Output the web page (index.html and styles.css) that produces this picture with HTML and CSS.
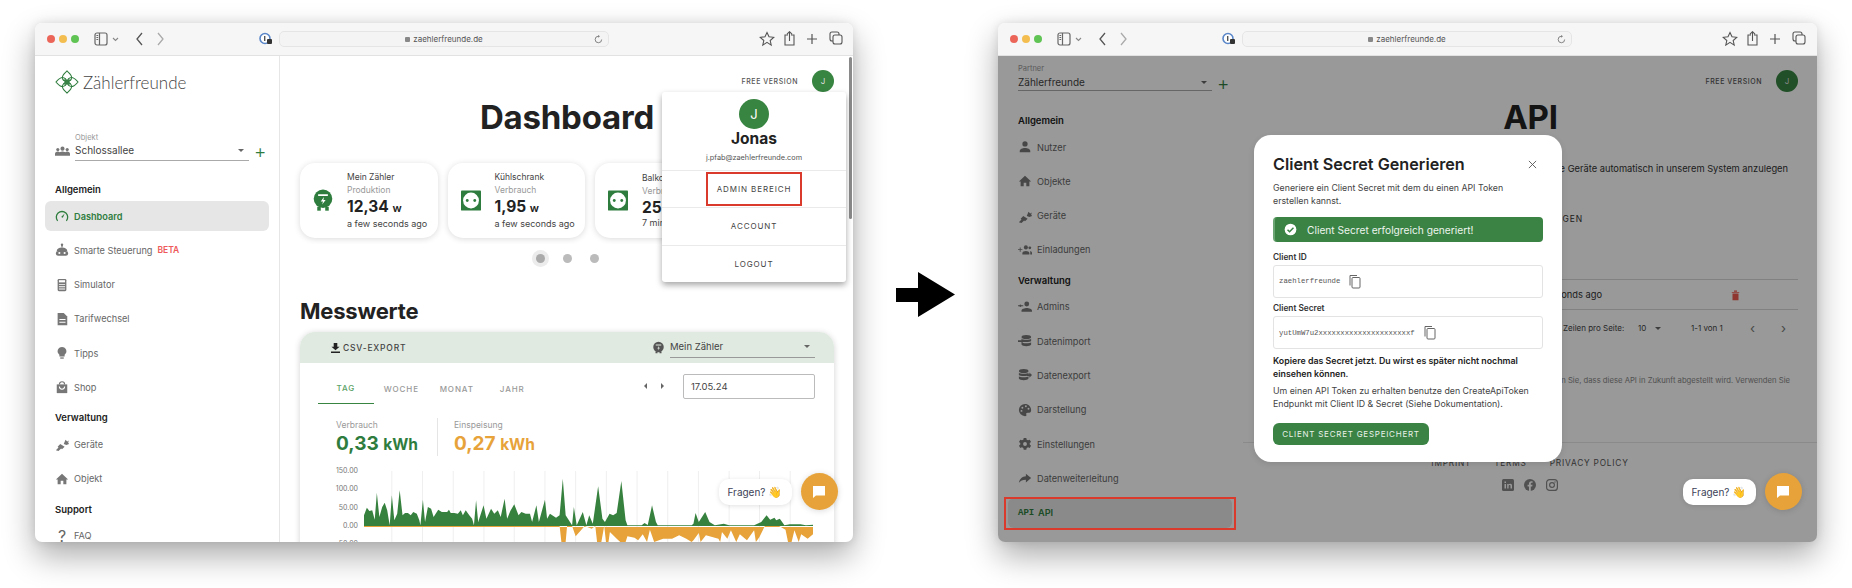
FILE: index.html
```html
<!DOCTYPE html>
<html lang="de">
<head>
<meta charset="utf-8">
<title>Zählerfreunde</title>
<link rel="stylesheet" href="styles.css">
</head>
<body>
<div class="stage">

<section class="window narrow">
  <header class="toolbar">
    <div class="lights"><i class="red"></i><i class="yellow"></i><i class="green"></i></div>
    <svg class="tb-side" viewBox="0 0 26 18"><rect x="1" y="1" width="12" height="12" rx="2" fill="none" stroke="#666" stroke-width="1.2"/><path d="M5.5 1v12" stroke="#666" stroke-width="1.2"/><path d="M2.4 3.5h1.8M2.4 5.5h1.8M2.4 7.5h1.8" stroke="#666"/><path d="M19 6l2.5 2.5L24 6" fill="none" stroke="#888" stroke-width="1.1"/></svg>
    <svg class="tb-nav" viewBox="0 0 28 14"><path d="M6 1L1 7l5 6" fill="none" stroke="#555" stroke-width="1.3"/><path d="M22 1l5 6-5 6" fill="none" stroke="#aaa" stroke-width="1.3"/></svg>
    <span class="shield"><svg viewBox="0 0 14 14"><circle cx="6" cy="6.5" r="5" fill="#fff" stroke="#5b87c9" stroke-width="1.6"/><rect x="5" y="4" width="1.4" height="5" fill="#555"/><rect x="8" y="7" width="5" height="5" rx="1" fill="#333"/></svg></span>
    <div class="urlbar"><span class="lock"></span>zaehlerfreunde.de<svg class="reload" viewBox="0 0 10 10"><path d="M8.5 5a3.6 3.6 0 1 1-3.6-3.6" fill="none" stroke="#777"/><path d="M4.6 0v3l2-1.5z" fill="#777"/></svg></div>
    <svg class="tb-actions" viewBox="0 0 84 16"><path d="M8 1.5l2 4.300 4.700.5-3.500 3.200 1 4.600L8 11.300l-4.200 2.800 1-4.600L1.300 6.300 6 5.800z" fill="none" stroke="#555" stroke-width="1.1"/><path d="M29 4h-3v10h9V4h-3M30.500 10V1M28 3.200l2.500-2.500L33 3.200" fill="none" stroke="#555" stroke-width="1.1"/><path d="M53 3v10M48 8h10" stroke="#555" stroke-width="1.2"/><rect x="71" y="1" width="9" height="9" rx="2" fill="none" stroke="#555" stroke-width="1.1"/><rect x="74" y="4" width="9" height="9" rx="2" fill="#f6f6f6" stroke="#555" stroke-width="1.1"/></svg>
  </header>
  <div class="app">
    <aside class="sidebar">
      <div class="logo">
        <svg class="logo-mark" viewBox="0 0 26 26"><g fill="none" stroke="#2f7d3e" stroke-width="1.1"><path d="M13 1C15 3 18 5 18 8C18 11 15 13 13 13C11 13 8 11 8 8C8 5 11 3 13 1z"/><path d="M13 1C15 3 18 5 18 8C18 11 15 13 13 13C11 13 8 11 8 8C8 5 11 3 13 1z" transform="rotate(90 13 13)"/><path d="M13 1C15 3 18 5 18 8C18 11 15 13 13 13C11 13 8 11 8 8C8 5 11 3 13 1z" transform="rotate(180 13 13)"/><path d="M13 1C15 3 18 5 18 8C18 11 15 13 13 13C11 13 8 11 8 8C8 5 11 3 13 1z" transform="rotate(270 13 13)"/><path d="M11 9v8M15 9v8M9 11h8M9 15h8"/></g></svg>
        <span class="logo-text">Zählerfreunde</span>
      </div>
      <div class="picker">
        <svg class="picker-icon" viewBox="0 0 16 10"><circle cx="8" cy="2.5" r="2.2"/><circle cx="3" cy="3.500" r="1.700"/><circle cx="13" cy="3.500" r="1.700"/><path d="M0 10V8c0-1.500 2-2.400 3-2.400s1.500.3 2 .6c1-.6 2-.8 3-.8s2 .2 3 .8c.5-.3 1-.6 2-.6s3 .9 3 2.400v2z"/></svg>
        <div class="picker-field">
          <label class="picker-label">Objekt</label>
          <div class="picker-value">Schlossallee<span class="caret"></span></div>
        </div>
        <span class="plus">+</span>
      </div>
      <h4 class="nav-head first">Allgemein</h4>
      <a class="nav-item active"><svg class="ni" viewBox="0 0 16 16"><path d="M3 13.500A6.500 6.500 0 1 1 13 13.500" fill="none" stroke="#2f7d3e" stroke-width="1.500"/><path d="M11 5L9 10 7 9z" fill="#2f7d3e"/></svg>Dashboard</a>
      <a class="nav-item"><svg class="ni" viewBox="0 0 16 16"><circle cx="8" cy="2" r="1.400"/><rect x="7.300" y="2" width="1.400" height="3"/><path d="M2 9c0-2.500 2.500-4 6-4s6 1.500 6 4z"/><rect x="1" y="9" width="14" height="5.500" rx="2.500"/><circle cx="5" cy="11.500" r="1.200" fill="#fff"/><circle cx="11" cy="11.500" r="1.200" fill="#fff"/></svg>Smarte Steuerung<span class="beta">BETA</span></a>
      <a class="nav-item"><svg class="ni" viewBox="0 0 16 16"><rect x="3" y="1" width="10" height="14" rx="1.500"/><rect x="4.500" y="2.500" width="7" height="2.500" fill="#fff"/><path d="M4.500 7h7v1h-7zM4.500 9.500h7v1h-7zM4.500 12h7v1h-7z" fill="#fff"/></svg>Simulator</a>
      <a class="nav-item"><svg class="ni" viewBox="0 0 16 16"><path d="M3 1h7l4 4v10H3z"/><path d="M5 8h7v1.200H5zM5 11h7v1.200H5z" fill="#fff"/></svg>Tarifwechsel</a>
      <a class="nav-item"><svg class="ni" viewBox="0 0 16 16"><path d="M8 1a5 5 0 0 0-3 9v2h6v-2a5 5 0 0 0-3-9z"/><rect x="6" y="13" width="4" height="1.500"/></svg>Tipps</a>
      <a class="nav-item"><svg class="ni" viewBox="0 0 16 16"><path d="M2 5h12v10H2z"/><path d="M5 5a3 3 0 0 1 6 0" fill="none" stroke="#777" stroke-width="1.300"/><path d="M5 7.500a3 3 0 0 0 6 0" fill="none" stroke="#fff" stroke-width="1.200"/></svg>Shop</a>
      <h4 class="nav-head">Verwaltung</h4>
      <a class="nav-item"><svg class="ni" viewBox="0 0 16 16"><path d="M1 15l3-3-1-1 3-3 5 3-3 3-1-1-3 3zM10 8l2-5 2 2 2-1-1 2 1 2-3 1z"/></svg>Geräte</a>
      <a class="nav-item"><svg class="ni" viewBox="0 0 16 16"><path d="M8 2L1 8.500h2V14h3.500v-4h3v4H13V8.500h2z"/></svg>Objekt</a>
      <h4 class="nav-head">Support</h4>
      <a class="nav-item"><span class="ni-q">?</span>FAQ</a>
    </aside>
    <main class="main">
      <div class="scrollthumb"></div>
      <div class="topbar"><span class="version">FREE VERSION</span><span class="avatar">J</span></div>
      <h1 class="title">Dashboard</h1>
      <div class="cards">
        <article class="card">
          <svg class="device" viewBox="0 0 22 26"><circle cx="11" cy="11" r="10.500" fill="#2f7d3e"/><rect x="4.500" y="20" width="4" height="4.500" fill="#2f7d3e"/><rect x="13.500" y="20" width="4" height="4.500" fill="#2f7d3e"/><path d="M5.500 6h11v1.800h-11zM12 9l-3.500 5h2.500l-1 3.500 4-5h-2.500z" fill="#fff"/></svg>
          <div class="card-body"><div class="c-name">Mein Zähler</div><div class="c-kind">Produktion</div><div class="c-val">12,34 <small>w</small></div><div class="c-time">a few seconds ago</div></div>
        </article>
        <article class="card">
          <svg class="device" viewBox="0 0 24 24"><rect width="24" height="24" rx="1" fill="#2f7d3e"/><circle cx="12" cy="12" r="9.500" fill="#fff"/><circle cx="7.500" cy="12" r="1.700" fill="#2f7d3e"/><circle cx="16.500" cy="12" r="1.700" fill="#2f7d3e"/></svg>
          <div class="card-body"><div class="c-name">Kühlschrank</div><div class="c-kind">Verbrauch</div><div class="c-val">1,95 <small>w</small></div><div class="c-time">a few seconds ago</div></div>
        </article>
        <article class="card">
          <svg class="device" viewBox="0 0 24 24"><rect width="24" height="24" rx="1" fill="#2f7d3e"/><circle cx="12" cy="12" r="9.500" fill="#fff"/><circle cx="7.500" cy="12" r="1.700" fill="#2f7d3e"/><circle cx="16.500" cy="12" r="1.700" fill="#2f7d3e"/></svg>
          <div class="card-body"><div class="c-name">Balkon</div><div class="c-kind">Verbrauch</div><div class="c-val">252</div><div class="c-time">7 min</div></div>
        </article>
      </div>
      <div class="dots"><i class="on"></i><i></i><i></i></div>
      <h2 class="section">Messwerte</h2>
      <div class="panel">
        <div class="panel-head">
          <span class="csv"><svg viewBox="0 0 10 11"><path d="M3 0h4v4h2.500L5 8 .5 4H3zM0 9.500h10V11H0z" fill="#222"/></svg>CSV-EXPORT</span>
          <div class="meter"><svg class="meter-icon" viewBox="0 0 22 24"><circle cx="11" cy="11" r="10.500" fill="#555"/><rect x="5" y="20" width="4" height="3.500" fill="#555"/><rect x="13" y="20" width="4" height="3.500" fill="#555"/><path d="M5.500 6h11v1.800h-11zM12 9l-3.500 5h2.500l-1 3.500 4-5h-2.500z" fill="#dfe9e0"/></svg><div class="meter-sel">Mein Zähler<span class="caret"></span></div></div>
        </div>
        <div class="tabrow">
          <nav class="tabs"><span class="tab on">TAG</span><span class="tab">WOCHE</span><span class="tab">MONAT</span><span class="tab">JAHR</span></nav>
          <div class="datepick"><span class="arrows"><i class="al"></i><i class="ar"></i></span><span class="dateinput">17.05.24</span></div>
        </div>
        <div class="stats">
          <div class="stat"><div class="s-label">Verbrauch</div><div class="s-val grn">0,33 <small>kWh</small></div></div>
          <div class="stat sep"><div class="s-label">Einspeisung</div><div class="s-val org">0,27 <small>kWh</small></div></div>
        </div>
        <div class="chart">
          <div class="axis"><span>150.00</span><span>100.00</span><span>50.00</span><span>0.00</span><span>-50.00</span></div>
          <svg class="plot" viewBox="207 32 1258 213" preserveAspectRatio="none">
            <path class="grid" d="M285 32v213M371 32v213M457 32v213M543 32v213M628 32v213M714 32v213M800 32v213M886 32v213M972 32v213M1058 32v213M1144 32v213M1230 32v213M1315 32v213M1401 32v213"/>
            <polygon fill="#e7a33a" points="207,196 755,196 760,245 772,245 776,197 790,197 800,228 815,210 825,197 845,205 855,197 860,245 872,245 880,197 885,245 892,245 896,215 915,235 925,245 940,245 945,228 965,232 975,240 988,222 1000,245 1008,208 1020,245 1045,235 1070,235 1090,225 1110,235 1125,245 1130,240 1145,218 1150,245 1165,225 1200,235 1205,245 1210,215 1225,235 1235,210 1250,245 1260,222 1280,240 1300,210 1305,245 1315,230 1330,197 1370,197 1388,208 1395,245 1405,245 1413,210 1425,245 1432,222 1450,235 1465,222 1465,196 1465,200 207,200"/>
            <polygon fill="#37813f" points="207,197 207,165 215,142 222,152 230,150 237,178 243,97 250,170 258,140 265,127 272,150 279,195 285,105 292,180 300,160 307,90 315,165 322,158 330,158 338,165 345,155 355,160 362,180 365,195 372,118 378,185 386,140 395,145 402,170 415,148 425,155 440,155 445,148 450,158 460,158 470,160 478,150 484,165 492,150 502,165 510,175 515,195 521,120 527,185 542,135 550,175 563,145 572,160 582,150 590,170 601,115 608,175 618,150 628,132 640,165 648,155 660,160 672,160 678,185 690,135 697,185 714,118 720,175 728,160 745,172 755,165 764,55 772,165 790,195 795,140 803,195 820,155 830,195 838,165 848,190 863,78 875,175 882,185 895,160 905,165 915,158 928,62 940,180 945,195 955,195 985,195 993,188 1002,194 1014,135 1025,185 1030,195 1125,195 1130,190 1136,158 1145,185 1163,155 1175,185 1190,195 1215,190 1230,195 1300,195 1320,185 1335,165 1345,178 1357,172 1362,180 1372,175 1385,195 1400,192 1430,192 1445,195 1465,193 1465,197"/>
          </svg>
        </div>
      </div>
      <div class="chat"><span class="chat-bubble">Fragen? <em>👋</em></span><span class="chat-btn"><svg viewBox="0 0 14 14"><path d="M1 1h12v9.500H4L1 13z" fill="#fff"/></svg></span></div>
      <div class="usermenu">
        <div class="um-head">
          <span class="um-avatar">J</span>
          <div class="um-name">Jonas</div>
          <div class="um-mail">j.pfab@zaehlerfreunde.com</div>
        </div>
        <div class="um-item"><span class="highlight">ADMIN BEREICH</span></div>
        <div class="um-item">ACCOUNT</div>
        <div class="um-item">LOGOUT</div>
      </div>
    </main>
  </div>
</section>

<svg class="bigarrow" viewBox="0 0 59 45"><path d="M0 16h22V0l37 22.500-37 22.500V30H0z" fill="#000"/></svg>

<section class="window">
  <header class="toolbar">
    <div class="lights"><i class="red"></i><i class="yellow"></i><i class="green"></i></div>
    <svg class="tb-side" viewBox="0 0 26 18"><rect x="1" y="1" width="12" height="12" rx="2" fill="none" stroke="#666" stroke-width="1.2"/><path d="M5.500 1v12" stroke="#666" stroke-width="1.2"/><path d="M2.400 3.500h1.800M2.400 5.500h1.800M2.400 7.500h1.800" stroke="#666"/><path d="M19 6l2.500 2.500L24 6" fill="none" stroke="#888" stroke-width="1.1"/></svg>
    <svg class="tb-nav" viewBox="0 0 28 14"><path d="M6 1L1 7l5 6" fill="none" stroke="#555" stroke-width="1.3"/><path d="M22 1l5 6-5 6" fill="none" stroke="#aaa" stroke-width="1.3"/></svg>
    <span class="shield"><svg viewBox="0 0 14 14"><circle cx="6" cy="6.500" r="5" fill="#fff" stroke="#5b87c9" stroke-width="1.6"/><rect x="5" y="4" width="1.400" height="5" fill="#555"/><rect x="8" y="7" width="5" height="5" rx="1" fill="#333"/></svg></span>
    <div class="urlbar"><span class="lock"></span>zaehlerfreunde.de<svg class="reload" viewBox="0 0 10 10"><path d="M8.500 5a3.600 3.600 0 1 1-3.600-3.600" fill="none" stroke="#777"/><path d="M4.600 0v3l2-1.500z" fill="#777"/></svg></div>
    <svg class="tb-actions" viewBox="0 0 84 16"><path d="M8 1.500l2 4.300 4.700.5-3.500 3.200 1 4.600L8 11.300l-4.200 2.800 1-4.600L1.300 6.300 6 5.800z" fill="none" stroke="#555" stroke-width="1.1"/><path d="M29 4h-3v10h9V4h-3M30.500 10V1M28 3.200l2.500-2.500L33 3.200" fill="none" stroke="#555" stroke-width="1.1"/><path d="M53 3v10M48 8h10" stroke="#555" stroke-width="1.2"/><rect x="71" y="1" width="9" height="9" rx="2" fill="none" stroke="#555" stroke-width="1.1"/><rect x="74" y="4" width="9" height="9" rx="2" fill="#f6f6f6" stroke="#555" stroke-width="1.1"/></svg>
  </header>
  <div class="app">
    <aside class="sidebar admin">
      <div class="picker partner">
        <div class="picker-field">
          <label class="picker-label">Partner</label>
          <div class="picker-value">Zählerfreunde<span class="caret"></span></div>
        </div>
        <span class="plus">+</span>
      </div>
      <h4 class="nav-head first">Allgemein</h4>
      <a class="nav-item"><svg class="ni" viewBox="0 0 16 16"><circle cx="8" cy="4.500" r="3"/><path d="M2 14v-1.500C2 10 5 9 8 9s6 1 6 3.500V14z"/></svg>Nutzer</a>
      <a class="nav-item"><svg class="ni" viewBox="0 0 16 16"><path d="M8 2L1 8.500h2V14h3.500v-4h3v4H13V8.500h2z"/></svg>Objekte</a>
      <a class="nav-item"><svg class="ni" viewBox="0 0 16 16"><path d="M1 15l3-3-1-1 3-3 5 3-3 3-1-1-3 3zM10 8l2-5 2 2 2-1-1 2 1 2-3 1z"/></svg>Geräte</a>
      <a class="nav-item"><svg class="ni" viewBox="0 0 16 16"><path d="M0 7h2V5h1v2h2v1H3v2H2V8H0z"/><circle cx="9" cy="5" r="2.300"/><circle cx="13.500" cy="5.500" r="1.600"/><path d="M5 13v-1.500c0-1.500 2-2.500 4-2.500s4 1 4 2.500V13zM14 9c1 .3 2 1 2 2v2h-2z"/></svg>Einladungen</a>
      <h4 class="nav-head">Verwaltung</h4>
      <a class="nav-item"><svg class="ni" viewBox="0 0 16 16"><circle cx="10" cy="4.500" r="2.800"/><path d="M4 13.500v-1.300C4 10 7.500 9 10 9s6 1 6 3.200v1.300zM0 6h1.500a1.500 1.500 0 0 1 2.500 0h2v1H4a1.500 1.500 0 0 1-2.500 0H0z"/></svg>Admins</a>
      <a class="nav-item"><svg class="ni" viewBox="0 0 16 16"><ellipse cx="9.500" cy="3.500" rx="5.500" ry="2.300"/><path d="M4 5.500c1 1.500 10 1.500 11 0v2.500c-1 1.500-10 1.500-11 0zM4 9.500c1 1.500 10 1.500 11 0V12c-1 2.500-10 2.500-11 0zM0 7h4v-2l3 3-3 3V9H0z"/></svg>Datenimport</a>
      <a class="nav-item"><svg class="ni" viewBox="0 0 16 16"><ellipse cx="6.500" cy="3.500" rx="5.500" ry="2.300"/><path d="M1 5.500c1 1.500 10 1.500 11 0v2.500c-1 1.500-10 1.500-11 0zM1 9.500c1 1.500 10 1.500 11 0V12c-1 2.500-10 2.500-11 0zM10 7h3v-2l3 3-3 3V9h-3z"/></svg>Datenexport</a>
      <a class="nav-item"><svg class="ni" viewBox="0 0 16 16"><path d="M8 1a7 7 0 0 0 0 14c1.500 0 2-1 1.500-2-.5-1 .2-2 1.500-2h2c1.200 0 2-1 2-3 0-4-3-7-7-7z"/><circle cx="5" cy="5.500" r="1.100" fill="#fff"/><circle cx="9" cy="3.800" r="1.100" fill="#fff"/><circle cx="12" cy="6.500" r="1.100" fill="#fff"/><circle cx="4" cy="9" r="1.100" fill="#fff"/></svg>Darstellung</a>
      <a class="nav-item"><svg class="ni" viewBox="0 0 16 16"><path d="M6.500 1h3l.4 2 1.600.8 1.900-.8 1.500 2.600-1.500 1.300v1.800l1.500 1.300-1.500 2.600-1.900-.8-1.600.8-.4 2h-3l-.4-2-1.600-.8-1.900.8L1.100 10l1.500-1.300V6.900L1.100 5.600l1.500-2.600 1.900.8 1.600-.8z"/><circle cx="8" cy="8" r="2.200" fill="#fff"/></svg>Einstellungen</a>
      <a class="nav-item"><svg class="ni" viewBox="0 0 16 16"><path d="M9 3l6 5-6 5V10c-4 0-6 1-8 3.500C2 8.500 5 6.500 9 6z"/></svg>Datenweiterleitung</a>
      <a class="nav-item active marked"><span class="ni-api">API</span>API</a>
    </aside>
    <main class="main">
      <div class="topbar"><span class="version">FREE VERSION</span><span class="avatar">J</span></div>
      <h1 class="title">API</h1>
      <p class="api-text">Nutze die API, um deine Geräte automatisch in unserem System anzulegen</p>
      <div class="api-action">ANZEIGEN</div>
      <div class="api-row"><span class="api-time">a few seconds ago</span><svg class="trash" viewBox="0 0 12 14"><path d="M1 3h10v1H1zM4 1h4v1.500H4zM2 5h8v9H2z" fill="#f05a50"/></svg></div>
      <div class="api-pager"><span class="pg-label">Zeilen pro Seite:</span><span class="pg-size">10<span class="caret"></span></span><span class="pg-range">1-1 von 1</span><span class="pg-prev">‹</span><span class="pg-next">›</span></div>
      <p class="api-note">Beachten Sie, dass diese API in Zukunft abgestellt wird. Verwenden Sie</p>
      <footer class="foot">
        <div class="foot-links"><span>IMPRINT</span><span>TERMS</span><span>PRIVACY POLICY</span></div>
        <div class="foot-icons">
          <svg viewBox="0 0 12 12"><rect width="12" height="12" rx="1.500" fill="#888"/><path d="M2.500 5h1.500v4.500H2.500zM2.500 2.500h1.500V4H2.500zM5.200 5h1.400v.7c.4-.6 1-.9 1.700-.9 1.300 0 1.700.9 1.700 2.100v2.600H8.500V7.200c0-.7-.2-1.200-.9-1.200-.8 0-1 .6-1 1.300v2.200H5.200z" fill="#fff"/></svg>
          <svg viewBox="0 0 12 12"><circle cx="6" cy="6" r="6" fill="#888"/><path d="M6.800 12V7.500h1.400l.3-1.700H6.800v-1c0-.6.300-1 1-1h.8V2.300C8.200 2.200 7.800 2.200 7.300 2.200c-1.500 0-2.300.9-2.300 2.400v1.200H3.600v1.700H5V12z" fill="#fff"/></svg>
          <svg viewBox="0 0 12 12"><rect x=".6" y=".6" width="10.800" height="10.800" rx="3" fill="none" stroke="#888" stroke-width="1.200"/><circle cx="6" cy="6" r="2.400" fill="none" stroke="#888" stroke-width="1.200"/><circle cx="9" cy="3" r=".7" fill="#888"/></svg>
        </div>
      </footer>
      <div class="chat"><span class="chat-bubble">Fragen? <em>👋</em></span><span class="chat-btn"><svg viewBox="0 0 14 14"><path d="M1 1h12v9.500H4L1 13z" fill="#fff"/></svg></span></div>
    </main>
    <div class="scrim"></div>
    <div class="modal">
      <div class="m-head"><h3>Client Secret Generieren</h3><svg class="m-close" viewBox="0 0 10 10"><path d="M1 1l8 8M9 1l-8 8" stroke="#555" stroke-width="1"/></svg></div>
      <p class="m-text intro">Generiere ein Client Secret mit dem du einen API Token erstellen kannst.</p>
      <div class="m-alert"><svg viewBox="0 0 14 14"><circle cx="7" cy="7" r="6.300" fill="#fff"/><path d="M3.800 7.200l2.200 2.200 4.200-4.300" fill="none" stroke="#3a8344" stroke-width="1.600"/></svg>Client Secret erfolgreich generiert!</div>
      <div class="m-label">Client ID</div>
      <div class="m-field"><code>zaehlerfreunde</code><svg viewBox="0 0 12 14"><path d="M1 11V1h7" fill="none" stroke="#666" stroke-width="1"/><rect x="3" y="3" width="8" height="10.500" rx="1" fill="none" stroke="#666" stroke-width="1"/></svg></div>
      <div class="m-label">Client Secret</div>
      <div class="m-field"><code>yutUmW7u2xxxxxxxxxxxxxxxxxxxxxf</code><svg viewBox="0 0 12 14"><path d="M1 11V1h7" fill="none" stroke="#666" stroke-width="1"/><rect x="3" y="3" width="8" height="10.500" rx="1" fill="none" stroke="#666" stroke-width="1"/></svg></div>
      <p class="m-strong">Kopiere das Secret jetzt. Du wirst es später nicht nochmal einsehen können.</p>
      <p class="m-text tight">Um einen API Token zu erhalten benutze den CreateApiToken Endpunkt mit Client ID &amp; Secret (Siehe Dokumentation).</p>
      <span class="m-btn">CLIENT SECRET GESPEICHERT</span>
    </div>
  </div>
</section>

</div>
</body>
</html>
```
FILE: styles.css
```css
* { box-sizing: border-box; }
html, body { margin: 0; height: 100%; background: #fff; overflow: hidden; }
body { font-family: Inter, "Liberation Sans", sans-serif; color: #222; }
.stage { width: 1852px; height: 588px; display: flex; align-items: flex-start; gap: 43px; padding: 23px 0 0 35px; }
.window { width: 819px; height: 519px; border-radius: 7px; overflow: hidden; background: #fff; box-shadow: 0 14px 32px rgba(0,0,0,.33), 0 0 10px rgba(0,0,0,.1); display: flex; flex-direction: column; flex: none; }
.window.narrow { width: 818px; }
.bigarrow { width: 59px; height: 45px; margin-top: 249px; flex: none; }

.toolbar { height: 33px; flex: none; background: #f6f6f6; border-bottom: 1px solid #e2e2e2; display: flex; align-items: center; padding-left: 12px; }
.lights { display: flex; gap: 4px; width: 47px; flex: none; }
.lights i { width: 8px; height: 8px; border-radius: 50%; }
.red { background: #ec6559; }
.yellow { background: #f4bd4f; }
.green { background: #5fc454; }
.tb-side { width: 26px; height: 18px; margin-top: 4px; flex: none; }
.tb-nav { width: 28px; height: 14px; margin-left: 16px; flex: none; }
.shield { width: 14px; height: 14px; margin-left: 95px; display: flex; flex: none; }
.urlbar { width: 330px; height: 16px; margin-left: 6px; flex: none; background: #f4f4f4; border: 1px solid #e5e5e5; border-radius: 5px; font-size: 8px; color: #555; display: flex; align-items: center; justify-content: center; position: relative; }
.lock { width: 5px; height: 5px; background: #888; border-radius: 1px; margin-right: 3px; }
.reload { width: 9px; height: 9px; position: absolute; right: 5px; top: 3px; }
.tb-actions { width: 84px; height: 16px; margin-left: 150px; flex: none; }

.app { flex: 1; min-height: 0; display: flex; position: relative; overflow: hidden; }
.sidebar { width: 245px; flex: none; border-right: 1px solid #e6e6e6; padding: 0 10px; overflow: hidden; }
.logo { display: flex; align-items: center; gap: 4px; height: 26px; margin: 13px 0 0 10px; }
.logo-mark { width: 24px; height: 24px; }
.logo-text { font-family: Lato, sans-serif; font-weight: 300; font-size: 17px; letter-spacing: 0; color: #444; }

.picker { display: flex; align-items: flex-end; margin: 38px 0 0 10px; }
.picker-icon { width: 15px; height: 10px; fill: #777; margin-bottom: 5px; margin-right: 5px; flex: none; }
.picker-field { width: 174px; border-bottom: 1px solid #aaa; height: 28px; }
.picker-label { display: block; font-size: 7.500px; color: #999; line-height: 10px; }
.picker-value { font-size: 10px; color: #444; line-height: 15px; display: flex; justify-content: space-between; align-items: center; padding-right: 5px; }
.caret { width: 0; height: 0; border: 3px solid transparent; border-top: 3.500px solid #666; border-bottom: 0; }
.plus { color: #2f7d3e; font-size: 19px; line-height: 16px; margin-left: 5px; margin-bottom: 1px; font-weight: 300; }

.nav-head { font-size: 9.500px; font-weight: 600; margin: 9px 0 4px 10px; line-height: 14px; color: #222; }
.nav-head.first { margin-top: 22px; }
.nav-item { display: flex; align-items: center; height: 30px; margin-bottom: 4.300px; padding-left: 10px; font-size: 9.200px; color: #666; border-radius: 6px; }
.ni { width: 14px; height: 14px; fill: #777; margin-right: 5px; flex: none; }
.nav-item.active { background: #e6e6e6; color: #2f7d3e; font-weight: 600; }
.beta { color: #ee5a5a; font-weight: 600; margin-left: 5px; font-size: 8.500px; }
.ni-q { width: 14px; margin-right: 5px; font-size: 16px; text-align: center; }
.ni-api { font-family: "Liberation Mono", monospace; font-size: 9px; width: 14px; margin-right: 6px; color: #2f7d3e; }

.main { flex: 1; min-width: 0; position: relative; padding: 0 19px 0 20px; overflow: hidden; }
.scrollthumb { position: absolute; right: 1px; top: 1px; width: 3px; height: 162px; background: #8a8a8a; border-radius: 2px; }
.topbar { display: flex; justify-content: flex-end; align-items: center; gap: 14px; height: 22px; margin-top: 14px; }
.version { font-size: 7px; letter-spacing: .55px; color: #555; font-weight: 500; }
.avatar { width: 22px; height: 22px; border-radius: 50%; background: #388441; color: #ddd; font-size: 8px; display: flex; align-items: center; justify-content: center; }
.title { font-size: 33px; font-weight: 700; margin: 3px 0 0; text-align: center; line-height: 44px; letter-spacing: -.2px; }

.cards { display: flex; gap: 10px; padding: 6px; margin: 18px -6px 0; overflow: hidden; }
.card { width: 137.500px; height: 75px; flex: none; border-radius: 15px; background: #fff; box-shadow: 0 1px 6px rgba(0,0,0,.15); display: flex; align-items: center; padding-left: 13px; }
.device { width: 20px; height: 23px; margin-right: 14px; flex: none; }
.card-body { line-height: 13px; }
.c-name { font-size: 8.500px; color: #444; }
.c-kind { font-size: 8.500px; color: #999; }
.c-val { font-size: 15.500px; font-weight: 700; line-height: 17px; margin-top: 1px; color: #222; }
.c-val small { font-size: 11px; font-weight: 600; }
.c-time { font-size: 9px; color: #444; margin-top: 0; }

.dots { display: flex; justify-content: center; gap: 18px; margin-top: 6px; height: 16px; align-items: center; }
.dots i { width: 9px; height: 9px; border-radius: 50%; background: #bbb; }
.dots i.on { background: #aaa; box-shadow: 0 0 0 4px #ececec; }
.section { font-size: 22px; font-weight: 700; margin: 30px 0 0; line-height: 30px; letter-spacing: -.2px; }

.panel { margin-top: 6px; width: 534px; border-radius: 15px 15px 0 0; box-shadow: 0 1px 6px rgba(0,0,0,.18); background: #fff; height: 300px; }
.panel-head { height: 31px; background: #e0eae1; border-radius: 15px 15px 0 0; display: flex; align-items: center; justify-content: space-between; padding: 0 19px 0 31px; }
.csv { display: flex; align-items: center; gap: 3px; font-size: 8.500px; letter-spacing: .8px; color: #444; font-weight: 500; }
.csv svg { width: 9px; height: 10px; }
.meter { display: flex; align-items: center; gap: 6px; }
.meter-icon { width: 11px; height: 13px; }
.meter-sel { width: 145px; height: 20px; border-bottom: 1px solid #999; font-size: 9.500px; color: #444; display: flex; justify-content: space-between; align-items: center; padding: 0 5px 2px 0; }

.tabrow { display: flex; justify-content: space-between; padding: 0 19px 0 18px; height: 41px; }
.tabs { display: flex; height: 41px; }
.tab { width: 55.500px; height: 41px; display: flex; align-items: center; justify-content: center; padding-top: 10px; font-size: 8px; letter-spacing: .9px; color: #999; font-weight: 500; }
.tab.on { color: #5ba266; border-bottom: 1.500px solid #388441; }
.datepick { display: flex; align-items: center; gap: 19px; height: 27px; margin-top: 10px; }
.arrows { display: flex; gap: 14px; margin-top: -1px; }
.arrows i { width: 0; height: 0; border: 3px solid transparent; }
.arrows .al { border-right: 3px solid #666; border-left: 0; }
.arrows .ar { border-left: 3px solid #666; border-right: 0; }
.dateinput { width: 132px; height: 25px; border: 1px solid #bbb; border-radius: 2px; font-size: 9.500px; padding-left: 7px; display: flex; align-items: center; color: #444; }

.stats { display: flex; padding: 14px 0 0 36px; height: 50px; }
.stat { width: 101px; padding-top: 1px; height: 38px; flex: none; }
.stat.sep { border-left: 1px solid #e5e5e5; padding-left: 16px; }
.s-label { font-size: 8.500px; color: #999; line-height: 12px; }
.s-val { font-size: 19px; font-weight: 700; line-height: 24px; margin-top: 1px; white-space: nowrap; }
.s-val small { font-size: 15.500px; }
.grn { color: #2f7d3e; }
.org { color: #e7a33a; }

.chart { display: flex; margin-top: 12px; padding-left: 20px; height: 200px; }
.axis { width: 44px; flex: none; display: flex; flex-direction: column; font-size: 7px; color: #777; align-items: flex-end; padding-right: 6px; }
.axis span { height: 18.300px; line-height: 10px; flex: none; }
.plot { width: 449px; height: 71px; flex: none; margin-top: 5px; }
.grid { stroke: #efefef; stroke-width: 1; vector-effect: non-scaling-stroke; }

.chat { position: absolute; right: 15.500px; bottom: 32px; display: flex; align-items: center; gap: 9px; z-index: 6; }
.chat-bubble { height: 26px; width: 73px; background: #fff; border-radius: 10px; box-shadow: 0 1px 5px rgba(0,0,0,.12); font-size: 10px; color: #3c4257; display: flex; align-items: center; justify-content: center; white-space: nowrap; }
.chat-bubble em { font-style: normal; font-size: 11px; margin-left: 3px; }
.chat-btn { width: 37px; height: 37px; border-radius: 50%; background: #e7a33a; display: flex; align-items: center; justify-content: center; box-shadow: 0 1px 6px rgba(0,0,0,.15); }
.chat-btn svg { width: 14px; height: 14px; }

.usermenu { position: absolute; right: 7px; top: 36px; width: 184px; height: 190px; background: #fff; border-radius: 3px; box-shadow: 0 3px 6px rgba(0,0,0,.35); z-index: 3; display: flex; flex-direction: column; }
.um-head { height: 78px; flex: none; display: flex; flex-direction: column; align-items: center; padding-top: 7px; }
.um-avatar { width: 30px; height: 30px; border-radius: 50%; background: #388441; color: #fff; font-size: 13px; display: flex; align-items: center; justify-content: center; flex: none; }
.um-name { font-size: 15.500px; font-weight: 700; line-height: 20px; margin-top: 0; }
.um-mail { font-size: 7.300px; color: #555; line-height: 13px; margin-top: 2px; }
.um-item { flex: 1; border-top: 1px solid #eaeaea; display: flex; align-items: center; justify-content: center; font-size: 8px; letter-spacing: .9px; color: #444; }
.highlight { border: 2px solid #d93a2b; padding: 9px 9px 9px; display: block; line-height: 12px; }

/* dimmed admin window */
.admin { border-right-color: transparent; }
.partner { margin: 0 0 0 10px; }
.partner .picker-field { width: 194px; height: 35px; padding-top: 7px; }
.partner .picker-label { line-height: 12px; }
.partner .plus { margin-left: 5px; margin-bottom: -1px; }
.admin .nav-head.first { margin-top: 23px; }
.marked { position: relative; font-weight: 500; }
.marked::after { content: ""; position: absolute; inset: -1px -4px -2px -4px; border: 2px solid #d93a2b; z-index: 6; }

.api-text { font-size: 9.300px; line-height: 12px; color: #333; margin: 24px 0 0; padding-right: 10px; white-space: nowrap; text-align: right; }
.api-action { font-size: 8.500px; line-height: 12px; letter-spacing: .9px; margin-top: 38px; padding-left: 270px; color: #333; }
.api-row { display: flex; align-items: center; font-size: 9.300px; color: #333; border-top: 1px solid #8a8a8a55; border-bottom: 1px solid #8a8a8a55; height: 31px; margin-top: 54px; }
.api-time { width: 339px; text-align: right; flex: none; }
.trash { width: 9px; height: 12px; margin-left: 129px; }
.api-pager { display: flex; align-items: center; height: 36px; padding-left: 300px; font-size: 8px; color: #444; white-space: nowrap; }
.pg-label { width: 75px; flex: none; }
.pg-size { width: 53px; flex: none; display: flex; align-items: center; gap: 9px; }
.pg-range { width: 59px; flex: none; }
.pg-prev { width: 31px; flex: none; font-size: 13px; color: #777; }
.pg-next { font-size: 13px; color: #777; }
.api-note { font-size: 7.700px; line-height: 12px; color: #888; margin: 29px 0 0; padding-right: 8px; text-align: right; white-space: nowrap; }
.foot { margin: 55px -19px 0 -20px; border-top: 1px solid #e6e6e6; padding-top: 15px; }
.foot-links { display: flex; justify-content: center; gap: 23px; font-size: 8.300px; line-height: 10px; letter-spacing: .8px; color: #555; }
.foot-icons { display: flex; justify-content: center; gap: 10px; margin-top: 11px; }
.foot-icons svg { width: 12px; height: 12px; }

.scrim { position: absolute; inset: 0; background: rgba(0,0,0,.4); z-index: 4; }
.modal { position: absolute; left: 256px; top: 79px; width: 308px; height: 327px; background: #fff; border-radius: 17px; z-index: 5; padding: 16px 19px; box-shadow: 0 2px 6px rgba(0,0,0,.1); }
.m-head { display: flex; justify-content: space-between; align-items: center; height: 26px; }
.m-head h3 { margin: 0; font-size: 16.200px; font-weight: 600; color: #222; }
.m-close { width: 9px; height: 9px; margin-right: 6px; }
.m-text { font-size: 8.800px; line-height: 13px; color: #444; margin: 0; }
.m-text.intro { margin-top: 3.500px; max-width: 245px; }
.m-text.tight { margin-top: 4px; }
.m-alert { height: 25px; background: #3a8344; border-radius: 4px; margin-top: 10.500px; display: flex; align-items: center; color: #eef4ee; font-size: 10.200px; padding-left: 9px; gap: 10px; border-left: 2px solid #6ca574; }
.m-alert svg { width: 13px; height: 13px; }
.m-label { font-size: 8.300px; font-weight: 600; color: #333; margin-top: 9.500px; line-height: 11px; }
.m-field + .m-label { margin-top: 5.500px; }
.m-field { height: 33px; margin-top: 2px; border: 1px solid #e3e3e3; border-radius: 3px; display: flex; align-items: center; padding-left: 5px; gap: 9px; }
.m-field code { font-family: "Liberation Mono", monospace; font-size: 7.300px; color: #555; white-space: nowrap; }
.m-field svg { width: 12px; height: 15px; }
.m-strong { font-size: 8.800px; font-weight: 600; line-height: 13px; margin: 4.500px 0 0; color: #222; }
.m-btn { display: flex; align-items: center; justify-content: center; height: 22px; width: 156px; background: #3a8344; color: #eaf2ea; border-radius: 6px; font-size: 8px; letter-spacing: .75px; margin-top: 13.500px; white-space: nowrap; }
```
